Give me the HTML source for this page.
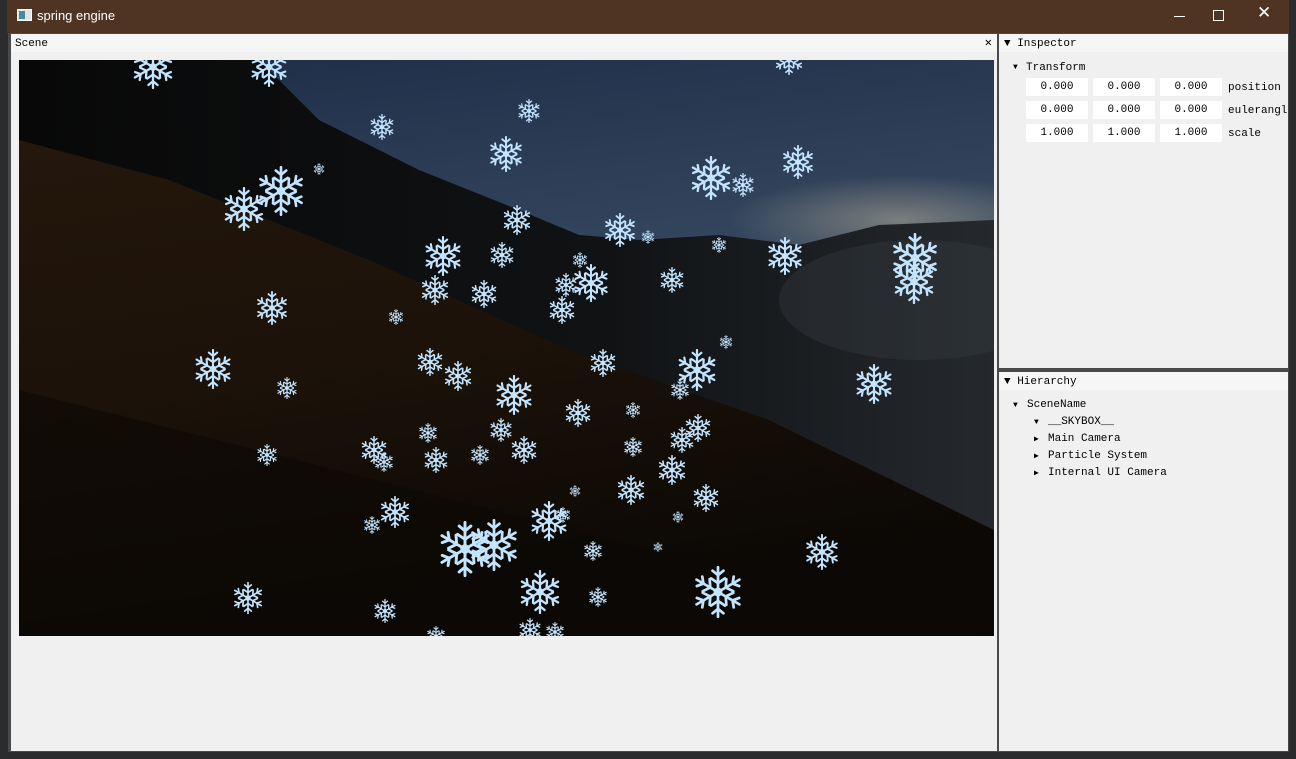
<!DOCTYPE html><html><head><meta charset="utf-8"><style>
*{margin:0;padding:0;box-sizing:border-box}
body{width:1296px;height:759px;overflow:hidden;background:#2a2b2d;position:relative;font-family:"Liberation Mono",monospace;font-size:11px;color:#000}
.abs{position:absolute}
.tb{left:7px;top:0;width:1282px;height:33px;background:#4f3424;color:#fff;font-family:"Liberation Sans",sans-serif;font-size:13px}
.panel{background:#f0f0f0}
.hdr{background:#f6f6f6;height:18px;line-height:18px}
.box{position:absolute;background:#fff;width:62px;height:18px;line-height:18px;text-align:center}
.t{position:absolute;white-space:pre;line-height:12px}
</style></head><body>
<div class="abs" style="left:0;top:0;width:7px;height:759px;background:#2b2c2e"></div>
<div class="abs tb">
 <div class="abs" style="left:10px;top:9px;width:15px;height:12px;background:#dfe6ea;border:1px solid #fff"><div style="width:6px;height:8px;background:#4a8a9a;margin:1px"></div></div>
 <div class="abs" style="left:30px;top:8px">spring engine</div>
 <div class="abs" style="left:1167px;top:16px;width:11px;height:1px;background:#fff"></div>
 <div class="abs" style="left:1206px;top:10px;width:11px;height:11px;border:1px solid #fff"></div>
 <div class="abs" style="left:1250px;top:3px;font-size:17px">✕</div>
</div>
<div class="abs" style="left:8px;top:33px;width:1281px;height:719px;background:#4a4a4a"></div>
<!-- scene -->
<div class="abs panel" style="left:11px;top:34px;width:986px;height:717px">
 <div class="hdr" style="padding-left:4px;padding-top:1px">Scene<span style="position:absolute;right:5px;top:0;font-size:12px">✕</span></div>
</div>
<svg class="abs" style="left:19px;top:60px" width="975" height="576" viewBox="0 0 975 576">
<defs>
<linearGradient id="sky" x1="0" y1="0" x2="0.2" y2="1"><stop offset="0" stop-color="#1f2d47"/><stop offset="0.45" stop-color="#34465e"/><stop offset="0.75" stop-color="#6a7173"/><stop offset="1" stop-color="#8a8a80"/></linearGradient>
<linearGradient id="for" x1="0" y1="0" x2="1" y2="0"><stop offset="0" stop-color="#080808"/><stop offset="0.6" stop-color="#101214"/><stop offset="1" stop-color="#25292d"/></linearGradient>
<linearGradient id="hill" x1="0" y1="0" x2="0.3" y2="1"><stop offset="0" stop-color="#24170c"/><stop offset="0.5" stop-color="#1c1209"/><stop offset="1" stop-color="#0b0805"/></linearGradient>
<radialGradient id="glow" cx="0.5" cy="0.5" r="0.5"><stop offset="0" stop-color="#b3ad98" stop-opacity="0.55"/><stop offset="1" stop-color="#b3ad98" stop-opacity="0"/></radialGradient>
<g id="arm" stroke="#c3e4ff" stroke-width="0.11" fill="none" stroke-linecap="round"><line x1="0" y1="0" x2="0" y2="-1"/><polyline points="-0.22,-0.86 0,-0.68 0.22,-0.86"/><polyline points="-0.28,-0.55 0,-0.36 0.28,-0.55"/></g>
<symbol id="s" viewBox="-1.05 -1.05 2.1 2.1"><use href="#arm"/><use href="#arm" transform="rotate(60)"/><use href="#arm" transform="rotate(120)"/><use href="#arm" transform="rotate(180)"/><use href="#arm" transform="rotate(240)"/><use href="#arm" transform="rotate(300)"/><circle r="0.18" fill="#c3e4ff"/></symbol>
</defs>
<rect width="975" height="576" fill="url(#sky)"/>
<ellipse cx="880" cy="160" rx="170" ry="45" fill="url(#glow)"/>
<polygon points="0,0 240,0 300,60 400,110 500,150 560,175 620,180 700,175 780,185 860,165 975,160 975,576 0,576" fill="url(#for)"/>
<ellipse cx="900" cy="240" rx="140" ry="60" fill="#3a3f44" opacity="0.35"/>
<polygon points="0,80 150,120 350,200 550,290 750,360 975,470 975,576 0,576" fill="url(#hill)"/>
<polygon points="0,330 975,576 0,576" fill="#0b0805" opacity="0.6"/>
<g id="flakes"></g>
</svg>
<!-- inspector -->
<div class="abs panel" style="left:999px;top:34px;width:289px;height:334px">
 <div class="hdr"><span class="t" style="left:5px;top:4px">▼ Inspector</span></div>
 <span class="t" style="left:14px;top:28px;font-size:8px">▼</span><span class="t" style="left:27px;top:28px">Transform</span>
 <div class="box" style="left:27px;top:44px">0.000</div><div class="box" style="left:94px;top:44px">0.000</div><div class="box" style="left:161px;top:44px">0.000</div><span class="t" style="left:229px;top:48px">position</span>
 <div class="box" style="left:27px;top:67px">0.000</div><div class="box" style="left:94px;top:67px">0.000</div><div class="box" style="left:161px;top:67px">0.000</div><span class="t" style="left:229px;top:71px">eulerangl</span>
 <div class="box" style="left:27px;top:90px">1.000</div><div class="box" style="left:94px;top:90px">1.000</div><div class="box" style="left:161px;top:90px">1.000</div><span class="t" style="left:229px;top:94px">scale</span>
</div>
<div class="abs panel" style="left:999px;top:372px;width:289px;height:379px">
 <div class="hdr"><span class="t" style="left:5px;top:4px">▼ Hierarchy</span></div>
 <span class="t" style="left:14px;top:28px;font-size:8px">▼</span><span class="t" style="left:28px;top:27px">SceneName</span>
 <span class="t" style="left:35px;top:45px;font-size:8px">▼</span><span class="t" style="left:49px;top:44px">__SKYBOX__</span>
 <span class="t" style="left:35px;top:62px;font-size:8px">▶</span><span class="t" style="left:49px;top:61px">Main Camera</span>
 <span class="t" style="left:35px;top:79px;font-size:8px">▶</span><span class="t" style="left:49px;top:78px">Particle System</span>
 <span class="t" style="left:35px;top:96px;font-size:8px">▶</span><span class="t" style="left:49px;top:95px">Internal UI Camera</span>
</div>
<script>
var f=[[153,67,22],[269,67,20],[789,60,15],[382,127,13],[529,111,12],[506,154,18],[319,169,6],[281,191,25],[244,209,22],[711,178,22],[743,185,12],[798,162,17],[517,220,15],[620,230,17],[648,237,7],[719,245,8],[785,256,19],[915,258,25],[914,282,22],[443,256,20],[502,255,13],[435,290,15],[484,294,14],[591,283,19],[566,285,12],[562,310,14],[580,260,8],[672,280,13],[272,308,17],[396,317,8],[213,369,20],[287,388,11],[430,362,14],[458,376,15],[514,395,20],[603,363,14],[697,370,21],[726,342,7],[874,384,20],[578,413,14],[633,410,8],[680,390,10],[267,455,11],[374,450,14],[384,462,10],[428,433,10],[436,460,13],[480,455,10],[501,430,12],[524,450,14],[633,447,10],[672,470,15],[682,440,13],[698,428,14],[706,498,14],[631,490,15],[395,512,16],[372,525,9],[549,521,20],[563,515,8],[593,551,10],[465,549,28],[494,545,26],[658,547,5],[678,517,6],[575,491,6],[822,552,18],[248,598,16],[385,611,12],[540,592,22],[598,597,10],[718,592,26],[436,636,10],[530,630,12],[555,632,10]];
var g=document.getElementById('flakes'),h='';
f.forEach(function(a){var x=a[0]-19,y=a[1]-60,r=a[2];h+='<use href="#s" x="'+(x-r)+'" y="'+(y-r)+'" width="'+(2*r)+'" height="'+(2*r)+'"/>';});
g.innerHTML=h;
</script>
</body></html>
